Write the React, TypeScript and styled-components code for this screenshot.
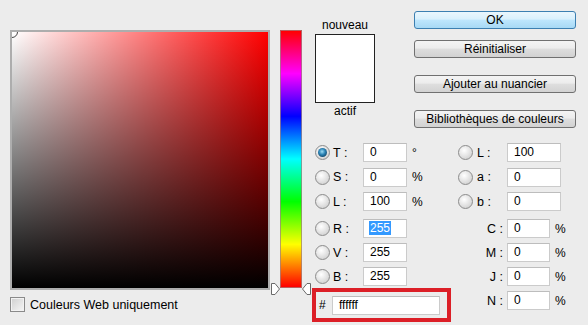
import React from "react";
import styled, { createGlobalStyle } from "styled-components";

const GlobalStyle = createGlobalStyle`
  body {
    margin: 0;
    background: #ececec;
  }
`;

const Dialog = styled.div`
  width: 588px;
  height: 325px;
  display: flex;
  background: #ececec;
  font-family: "Liberation Sans", Arial, sans-serif;
  font-size: 12px;
  color: #000;
  overflow: hidden;
`;

const LeftPane = styled.div`
  display: flex;
  flex-direction: column;
  padding: 30px 0 0 10px;
`;

const ColorField = styled.div`
  position: relative;
  width: 256px;
  height: 256px;
  border: 2px solid #adadad;
  background: linear-gradient(to bottom, rgba(0, 0, 0, 0), #000),
    linear-gradient(to right, #fff, #f00);
  overflow: hidden;
`;

const FieldMarker = styled.div`
  position: absolute;
  left: -6px;
  top: -6px;
  width: 10px;
  height: 10px;
  border: 1.5px solid #444;
  border-radius: 50%;
`;

const WebOption = styled.label`
  display: flex;
  align-items: center;
  gap: 5px;
  margin-top: 7px;
  font-size: 12.5px;
`;

const CheckBox = styled.span`
  width: 13px;
  height: 13px;
  border: 1px solid #8a8a8a;
  background: linear-gradient(135deg, #cfcfcf, #f6f6f6);
  box-shadow: inset 0 0 0 1px #f2f2f2;
`;

const HueColumn = styled.div`
  position: relative;
  margin: 30px 0 0 10px;
  width: 20px;
  height: 256px;
  border: 1px solid rgba(160, 130, 130, 0.75);
  background: linear-gradient(to bottom, #f00, #f0f, #00f, #0ff, #0f0, #ff0, #f00);
`;

const SliderArrow = styled.svg<{ $side: "left" | "right" }>`
  position: absolute;
  top: 252px;
  ${(p) => (p.$side === "left" ? "left: -10px;" : "right: -10px; transform: scaleX(-1);")}
`;

const RightPane = styled.div`
  margin-left: 10px;
  width: 276px;
  display: flex;
  flex-direction: column;
`;

const TopSection = styled.div`
  display: flex;
  height: 143px;
`;

const PreviewCol = styled.div`
  margin-left: 3px;
  width: 60px;
  padding-top: 18px;
  display: flex;
  flex-direction: column;
  align-items: center;
`;

const PreviewLabel = styled.div<{ $mt?: number }>`
  line-height: 14px;
  margin-top: ${(p) => p.$mt ?? 0}px;
`;

const Swatch = styled.div<{ $color: string }>`
  margin-top: 2px;
  width: 58px;
  height: 67px;
  border: 1px solid #222;
  background: ${(p) => p.$color};
`;

const ButtonsCol = styled.div`
  margin-left: 39px;
  width: 162px;
  padding-top: 11px;
  display: flex;
  flex-direction: column;
`;

const DialogButton = styled.button<{ $primary?: boolean; $mt: number }>`
  height: 18px;
  margin: ${(p) => p.$mt}px 0 0;
  padding: 0;
  box-sizing: border-box;
  border: 1px solid ${(p) => (p.$primary ? "#3c7fb1" : "#707070")};
  border-radius: 3px;
  background: ${(p) =>
    p.$primary
      ? "linear-gradient(#eaf6fd 0%, #d9f0fc 45%, #bee6fd 50%, #a7d9f5 100%)"
      : "linear-gradient(#f4f4f4 0%, #ececec 45%, #dedede 50%, #d2d2d2 100%)"};
  font: inherit;
  font-size: 12px;
  line-height: 16px;
  color: #000;
`;

const FieldsSection = styled.div`
  display: flex;
`;

const FieldsCol = styled.div<{ $ml?: number; $w: number }>`
  margin-left: ${(p) => p.$ml ?? 0}px;
  width: ${(p) => p.$w}px;
  display: flex;
  flex-direction: column;
`;

const Group = styled.div<{ $mt?: number; $gap: number }>`
  display: flex;
  flex-direction: column;
  gap: ${(p) => p.$gap}px;
  margin-top: ${(p) => p.$mt ?? 0}px;
`;

const Row = styled.div<{ $pl?: number }>`
  display: flex;
  align-items: center;
  height: 19px;
  padding-left: ${(p) => p.$pl ?? 0}px;
`;

const Radio = styled.span<{ $on?: boolean }>`
  position: relative;
  flex: none;
  width: 13px;
  height: 13px;
  border-radius: 50%;
  border: 1px solid #8c8c8c;
  background: radial-gradient(circle at 40% 35%, #ffffff 0%, #e6e6e6 45%, #c6c6c6 100%);
  &::after {
    content: "";
    display: ${(p) => (p.$on ? "block" : "none")};
    position: absolute;
    inset: 2px;
    border-radius: 50%;
    background: radial-gradient(circle at 45% 40%, #9edcf4 0%, #2d86b8 40%, #0c3b5c 85%);
  }
`;

const Label = styled.span<{ $w: number; $ml: number; $right?: boolean }>`
  width: ${(p) => p.$w}px;
  margin-left: ${(p) => p.$ml}px;
  text-align: ${(p) => (p.$right ? "right" : "left")};
  font-size: 12.5px;
  flex: none;
`;

const ValueBox = styled.div<{ $w: number; $ml?: number }>`
  width: ${(p) => p.$w}px;
  height: 19px;
  margin-left: ${(p) => p.$ml ?? 0}px;
  box-sizing: border-box;
  border: 1px solid #cbcbcb;
  border-top-color: #bdbdbd;
  background: #fff;
  padding-left: 6px;
  line-height: 17px;
  flex: none;
`;

const Selected = styled.span`
  background: #3399ff;
  color: #fff;
  padding: 0 1px;
  margin-left: -1px;
`;

const Unit = styled.span`
  margin-left: 5px;
`;

const HexBox = styled.div`
  margin-top: 2px;
  width: 128px;
  height: 26px;
  border: 4px solid #dc1f27;
  display: flex;
  align-items: center;
  padding-left: 3px;
  box-sizing: content-box;
`;

const HexSign = styled.span`
  width: 13px;
`;

const Arrow = ({ side }: { side: "left" | "right" }) => (
  <SliderArrow $side={side} width="9" height="12" viewBox="0 0 9 12">
    <polygon points="0.5,0.5 4,0.5 8.5,6 4,11.5 0.5,11.5" fill="#fff" stroke="#6a6a6a" />
  </SliderArrow>
);

type Field = { key: string; value: React.ReactNode; unit?: string; on?: boolean };

const hsb: Field[] = [
  { key: "T", value: "0", unit: "°", on: true },
  { key: "S", value: "0", unit: "%" },
  { key: "L", value: "100", unit: "%" },
];
const rgb: Field[] = [
  { key: "R", value: <Selected>255</Selected> },
  { key: "V", value: "255" },
  { key: "B", value: "255" },
];
const lab: Field[] = [
  { key: "L", value: "100" },
  { key: "a", value: "0" },
  { key: "b", value: "0" },
];
const cmyk: Field[] = [
  { key: "C", value: "0" },
  { key: "M", value: "0" },
  { key: "J", value: "0" },
  { key: "N", value: "0" },
];

const RadioRow = ({ f, pl, labelW, boxW, gap }: { f: Field; pl: number; labelW: number; boxW: number; gap: number }) => (
  <Row $pl={pl}>
    <Radio $on={f.on} />
    <Label $w={labelW} $ml={gap}>
      {f.key} :
    </Label>
    <ValueBox $w={boxW}>{f.value}</ValueBox>
    {f.unit && <Unit>{f.unit}</Unit>}
  </Row>
);

export default function App() {
  return (
    <>
      <GlobalStyle />
      <Dialog>
        <LeftPane>
          <ColorField>
            <FieldMarker />
          </ColorField>
          <WebOption>
            <CheckBox />
            Couleurs Web uniquement
          </WebOption>
        </LeftPane>

        <HueColumn>
          <Arrow side="left" />
          <Arrow side="right" />
        </HueColumn>

        <RightPane>
          <TopSection>
            <PreviewCol>
              <PreviewLabel>nouveau</PreviewLabel>
              <Swatch $color="#ffffff" />
              <PreviewLabel $mt={1}>actif</PreviewLabel>
            </PreviewCol>
            <ButtonsCol>
              <DialogButton $primary $mt={0}>OK</DialogButton>
              <DialogButton $mt={11}>Réinitialiser</DialogButton>
              <DialogButton $mt={17}>Ajouter au nuancier</DialogButton>
              <DialogButton $mt={17}>Bibliothèques de couleurs</DialogButton>
            </ButtonsCol>
          </TopSection>

          <FieldsSection>
            <FieldsCol $w={136}>
              <Group $gap={5.5}>
                {hsb.map((f) => (
                  <RadioRow key={f.key} f={f} pl={3} labelW={30} boxW={44} gap={3} />
                ))}
              </Group>
              <Group $gap={5} $mt={8}>
                {rgb.map((f) => (
                  <RadioRow key={f.key} f={f} pl={3} labelW={30} boxW={44} gap={3} />
                ))}
              </Group>
              <HexBox>
                <HexSign>#</HexSign>
                <ValueBox $w={108}>ffffff</ValueBox>
              </HexBox>
            </FieldsCol>

            <FieldsCol $ml={10} $w={130}>
              <Group $gap={5.5}>
                {lab.map((f) => (
                  <RadioRow key={f.key} f={f} pl={0} labelW={30} boxW={54} gap={4} />
                ))}
              </Group>
              <Group $gap={5} $mt={8}>
                {cmyk.map((f) => (
                  <Row key={f.key} $pl={19}>
                    <Label $w={26} $ml={0} $right>
                      {f.key} :
                    </Label>
                    <ValueBox $w={43} $ml={4}>
                      {f.value}
                    </ValueBox>
                    <Unit>%</Unit>
                  </Row>
                ))}
              </Group>
            </FieldsCol>
          </FieldsSection>
        </RightPane>
      </Dialog>
    </>
  );
}
